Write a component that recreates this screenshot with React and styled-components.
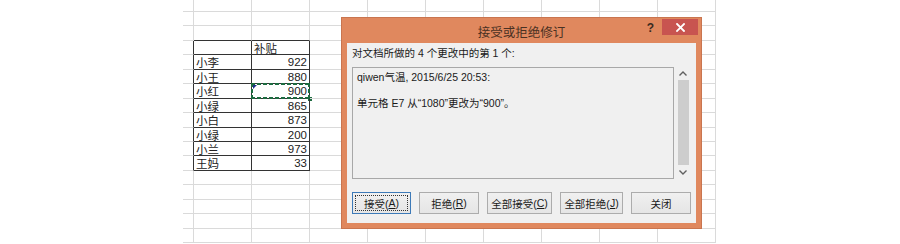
import React from "react";
import styled, { createGlobalStyle } from "styled-components";

const GlobalStyle = createGlobalStyle`
  html, body {
    margin: 0;
    padding: 0;
    background: #ffffff;
  }
  * {
    box-sizing: border-box;
  }
`;

const ROW_H = 14.44;
const COLS = 10;
const ROWS = 17;
const GRID = "#dadada";
const DARK = "#333333";
const CJK = `"Noto Sans CJK SC", "Noto Sans", sans-serif`;
const ARIAL = `"Liberation Sans", Arial, sans-serif`;
const UI = `"Liberation Sans", "Noto Sans CJK SC", sans-serif`;

const rows = [
  ["小李", 922],
  ["小王", 880],
  ["小红", 900],
  ["小绿", 865],
  ["小白", 873],
  ["小绿", 200],
  ["小兰", 973],
  ["王妈", 33],
];

const TABLE_TOP = 3;
const TABLE_BOTTOM = TABLE_TOP + rows.length;
const SELECTED_ROW = TABLE_TOP + 3;

export default function App() {
  const cells = [];
  for (let r = 0; r < ROWS; r++) {
    for (let c = 0; c < COLS; c++) {
      const inTable = r >= TABLE_TOP && r <= TABLE_BOTTOM && (c === 1 || c === 2);
      const aboveTable = r === TABLE_TOP - 1 && (c === 1 || c === 2);
      const leftOfTable = c === 0 && r >= TABLE_TOP && r <= TABLE_BOTTOM;
      const right = inTable || leftOfTable ? DARK : GRID;
      const bottom = inTable || aboveTable ? DARK : GRID;

      let content = null;
      let num = false;
      if (r === TABLE_TOP && c === 2) content = "补贴";
      if (r > TABLE_TOP && r <= TABLE_BOTTOM) {
        const [name, value] = rows[r - TABLE_TOP - 1];
        if (c === 1) content = name;
        if (c === 2) {
          content = value;
          num = true;
        }
      }
      const selected = r === SELECTED_ROW && c === 2;

      cells.push(
        <Cell key={`${r}-${c}`} $right={right} $bottom={bottom} $num={num}>
          {content}
          {selected && (
            <>
              <Marquee />
              <RevisionMark />
            </>
          )}
        </Cell>
      );
    }
  }

  return (
    <Page>
      <GlobalStyle />
      <Sheet>{cells}</Sheet>

      <Dialog>
        <TitleBar>
          <Title>接受或拒绝修订</Title>
          <Help>?</Help>
          <CloseButton>
            <svg width="9" height="9" viewBox="0 0 9 9">
              <path
                d="M1 1 L8 8 M8 1 L1 8"
                stroke="#ffffff"
                strokeWidth="1.8"
                strokeLinecap="square"
              />
            </svg>
          </CloseButton>
        </TitleBar>

        <Client>
          <Label>对文档所做的 4 个更改中的第 1 个:</Label>
          <DetailRow>
            <DetailBox>
              <DetailLine>qiwen气温, 2015/6/25 20:53:</DetailLine>
              <DetailLine>&nbsp;</DetailLine>
              <DetailLine>单元格 E7 从“1080”更改为“900”。</DetailLine>
            </DetailBox>
            <ScrollBar>
              <ScrollArrow>
                <svg width="8" height="5" viewBox="0 0 8 5">
                  <path d="M0.5 4.5 L4 1 L7.5 4.5" fill="none" stroke="#606060" strokeWidth="1.4" />
                </svg>
              </ScrollArrow>
              <Thumb />
              <ScrollArrow>
                <svg width="8" height="5" viewBox="0 0 8 5">
                  <path d="M0.5 0.5 L4 4 L7.5 0.5" fill="none" stroke="#606060" strokeWidth="1.4" />
                </svg>
              </ScrollArrow>
            </ScrollBar>
          </DetailRow>

          <ButtonRow>
            <Button $w={59} $focused>
              <FocusRing>
                接受(<u>A</u>)
              </FocusRing>
            </Button>
            <Button $w={60}>
              拒绝(<u>R</u>)
            </Button>
            <Button $w={65}>
              全部接受(<u>C</u>)
            </Button>
            <Button $w={63}>
              全部拒绝(<u>J</u>)
            </Button>
            <Button $w={60}>关闭</Button>
          </ButtonRow>
        </Client>
      </Dialog>
    </Page>
  );
}

const Page = styled.div`
  position: relative;
  width: 900px;
  height: 244px;
  overflow: hidden;
  background: #ffffff;
`;

const Sheet = styled.div`
  display: grid;
  grid-template-columns: 11px repeat(9, 58px);
  grid-template-rows: repeat(${ROWS}, ${ROW_H}px);
  margin-left: 183px;
  margin-top: -2.44px;
`;

const Cell = styled.div`
  position: relative;
  border-right: 1px solid ${(p) => p.$right};
  border-bottom: 1px solid ${(p) => p.$bottom};
  padding: 0 2px;
  font-family: ${(p) => (p.$num ? ARIAL : CJK)};
  font-size: 11.5px;
  line-height: 14px;
  color: #222222;
  text-align: ${(p) => (p.$num ? "right" : "left")};
  white-space: nowrap;
`;

const Marquee = styled.div`
  position: absolute;
  left: -1px;
  top: -1px;
  right: -1px;
  bottom: -1px;
  background:
    repeating-linear-gradient(90deg, #1d6b40 0 4px, transparent 4px 6px) top left / 100% 2px no-repeat,
    repeating-linear-gradient(90deg, #1d6b40 0 4px, transparent 4px 6px) bottom left / 100% 2px no-repeat,
    repeating-linear-gradient(180deg, #1d6b40 0 4px, transparent 4px 6px) top left / 2px 100% no-repeat,
    repeating-linear-gradient(180deg, #1d6b40 0 4px, transparent 4px 6px) top right / 2px 100% no-repeat;

  &::after {
    content: "";
    position: absolute;
    right: -2px;
    bottom: -2px;
    width: 4px;
    height: 4px;
    background: #1d6b40;
  }
`;

const RevisionMark = styled.div`
  position: absolute;
  left: 1px;
  top: 1px;
  width: 0;
  height: 0;
  border-top: 4px solid #1c2f8a;
  border-right: 4px solid transparent;
`;

const Dialog = styled.div`
  position: absolute;
  left: 341px;
  top: 17px;
  width: 361px;
  height: 212px;
  background: #e0885e;
  border: 1px solid #c9754f;
  display: flex;
  flex-direction: column;
`;

const TitleBar = styled.div`
  height: 25px;
  display: flex;
  align-items: flex-start;
  position: relative;
`;

const Title = styled.div`
  flex: 1;
  text-align: center;
  font-family: ${CJK};
  font-size: 12.5px;
  line-height: 25px;
  color: #4a3123;
  padding-top: 1px;
`;

const Help = styled.div`
  position: absolute;
  right: 47px;
  top: 3px;
  font-family: ${ARIAL};
  font-weight: bold;
  font-size: 12px;
  color: #3a2a20;
`;

const CloseButton = styled.div`
  position: absolute;
  right: 3px;
  top: 1px;
  width: 36px;
  height: 16px;
  background: #c85450;
  display: flex;
  align-items: center;
  justify-content: center;
`;

const Client = styled.div`
  flex: 1;
  margin: 0 5px 5px 5px;
  background: #f0f0f0;
  padding: 3px 5px 0 5px;
`;

const Label = styled.div`
  font-family: ${UI};
  font-size: 10.5px;
  line-height: 14px;
  height: 21px;
  color: #1a1a1a;
`;

const DetailRow = styled.div`
  display: flex;
  height: 112px;
`;

const DetailBox = styled.div`
  width: 325px;
  height: 100%;
  border: 1px solid #a8a8a8;
  background: #f0f0f0;
  padding: 3px 4px;
`;

const DetailLine = styled.div`
  font-family: ${UI};
  font-size: 10.5px;
  line-height: 13px;
  color: #1a1a1a;
  white-space: nowrap;
`;

const ScrollBar = styled.div`
  width: 17px;
  height: 100%;
  display: flex;
  flex-direction: column;
  align-items: center;
`;

const ScrollArrow = styled.div`
  height: 13px;
  display: flex;
  align-items: center;
  justify-content: center;
`;

const Thumb = styled.div`
  flex: 1;
  width: 11px;
  margin: 0 0 1px 1px;
  background: #cdcdcd;
`;

const ButtonRow = styled.div`
  display: flex;
  gap: 8px;
  margin-top: 13px;
`;

const Button = styled.div`
  width: ${(p) => p.$w}px;
  height: 22px;
  border: 1px solid ${(p) => (p.$focused ? "#3d7ab8" : "#acacac")};
  background: linear-gradient(#f0f0f0, #e5e5e5);
  font-family: ${UI};
  font-size: 10.5px;
  color: #1a1a1a;
  display: flex;
  align-items: center;
  justify-content: center;
  padding: ${(p) => (p.$focused ? "2px" : "0")};

  u {
    text-underline-offset: 1px;
  }
`;

const FocusRing = styled.div`
  width: 100%;
  height: 100%;
  border: 1px dotted #333333;
  display: flex;
  align-items: center;
  justify-content: center;
`;
